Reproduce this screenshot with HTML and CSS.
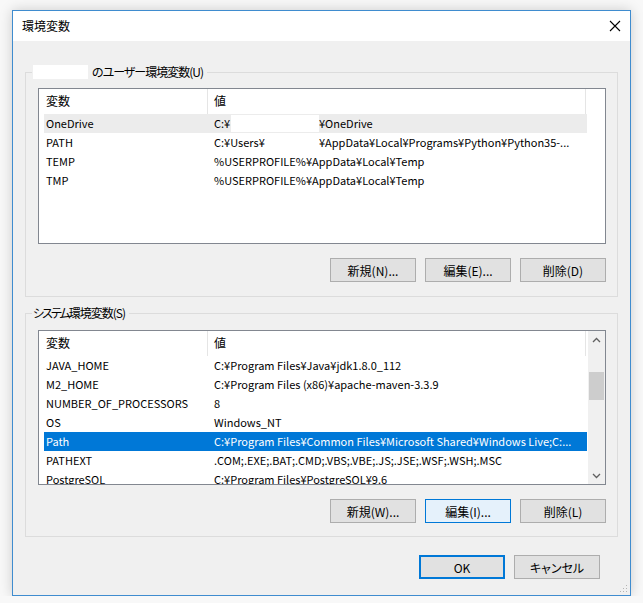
FILE: index.html
```html
<!DOCTYPE html>
<html lang="ja">
<head>
<meta charset="utf-8">
<title>環境変数</title>
<link rel="stylesheet" href="styles.css">
</head>
<body>
<div class="window">
  <div class="titlebar">
    <span class="title">環境変数</span>
    <svg class="close" width="12" height="12" viewBox="0 0 12 12"><path d="M1 1 L11 11 M11 1 L1 11" stroke="#000" stroke-width="1.1" fill="none"/></svg>
  </div>
  <div class="content">
    <section class="group group-user">
      <div class="legend"><span class="mask-name"></span><span>のユーザー環境変数(U)</span></div>
      <div class="list list-user">
        <div class="list-main">
          <div class="list-head"><div class="hc hc1">変数</div><div class="hc hc2">値</div></div>
          <div class="rows">
            <div class="row hover"><span class="c1">OneDrive</span><span class="c2"><span class="lead">C:¥<span class="mask"></span></span>¥OneDrive</span></div>
            <div class="row"><span class="c1">PATH</span><span class="c2"><span class="lead">C:¥Users¥<span class="mask"></span></span>¥AppData¥Local¥Programs¥Python¥Python35-...</span></div>
            <div class="row"><span class="c1">TEMP</span><span class="c2">%USERPROFILE%¥AppData¥Local¥Temp</span></div>
            <div class="row"><span class="c1">TMP</span><span class="c2">%USERPROFILE%¥AppData¥Local¥Temp</span></div>
          </div>
        </div>
        <div class="scroll-space"></div>
      </div>
      <div class="buttons">
        <button class="btn">新規(N)...</button>
        <button class="btn">編集(E)...</button>
        <button class="btn">削除(D)</button>
      </div>
    </section>

    <section class="group group-system">
      <div class="legend"><span><span class="kana">システム</span>環境変数(S)</span></div>
      <div class="list list-system">
        <div class="list-main">
          <div class="list-head"><div class="hc hc1">変数</div><div class="hc hc2">値</div></div>
          <div class="rows">
            <div class="row"><span class="c1">JAVA_HOME</span><span class="c2">C:¥Program Files¥Java¥jdk1.8.0_112</span></div>
            <div class="row"><span class="c1">M2_HOME</span><span class="c2">C:¥Program Files (x86)¥apache-maven-3.3.9</span></div>
            <div class="row"><span class="c1">NUMBER_OF_PROCESSORS</span><span class="c2">8</span></div>
            <div class="row"><span class="c1">OS</span><span class="c2">Windows_NT</span></div>
            <div class="row sel"><span class="c1">Path</span><span class="c2">C:¥Program Files¥Common Files¥Microsoft Shared¥Windows Live;C:...</span></div>
            <div class="row"><span class="c1">PATHEXT</span><span class="c2">.COM;.EXE;.BAT;.CMD;.VBS;.VBE;.JS;.JSE;.WSF;.WSH;.MSC</span></div>
            <div class="row"><span class="c1">PostgreSQL</span><span class="c2">C:¥Program Files¥PostgreSQL¥9.6</span></div>
          </div>
        </div>
        <div class="scrollbar">
          <div class="arrow"><svg width="9" height="6" viewBox="0 0 9 6"><path d="M1 5 L4.5 1.5 L8 5" stroke="#606060" stroke-width="1.3" fill="none"/></svg></div>
          <div class="track"><div class="thumb"></div></div>
          <div class="arrow"><svg width="9" height="6" viewBox="0 0 9 6"><path d="M1 1 L4.5 4.5 L8 1" stroke="#606060" stroke-width="1.3" fill="none"/></svg></div>
        </div>
      </div>
      <div class="buttons">
        <button class="btn">新規(W)...</button>
        <button class="btn focus">編集(I)...</button>
        <button class="btn">削除(L)</button>
      </div>
    </section>

    <div class="dialog-buttons">
      <button class="btn default">OK</button>
      <button class="btn">キャンセル</button>
    </div>
  </div>
  <svg class="grip" width="8" height="8" viewBox="0 0 8 8">
    <rect x="6" y="0" width="1" height="1" fill="#b5b5b5"/>
    <rect x="3" y="3" width="1" height="1" fill="#b5b5b5"/>
    <rect x="6" y="3" width="1" height="1" fill="#b5b5b5"/>
    <rect x="0" y="6" width="1" height="1" fill="#b5b5b5"/>
    <rect x="3" y="6" width="1" height="1" fill="#b5b5b5"/>
    <rect x="6" y="6" width="1" height="1" fill="#b5b5b5"/>
  </svg>
</div>
</body>
</html>
```

FILE: styles.css
```css
* {
  box-sizing: border-box;
}

body {
  margin: 0;
  background: #f8f8f8;
  font-family: "Noto Sans CJK JP", "Noto Sans", sans-serif;
  font-size: 12px;
  font-feature-settings: "palt";
  color: #000;
}

.window {
  position: relative;
  margin: 10px 0 0 12px;
  width: 619px;
  height: 586px;
  border: 1px solid #3f8ccf;
  background: #f0f0f0;
  box-shadow: 0 0 12px rgba(0, 0, 0, 0.18);
  display: flex;
  flex-direction: column;
}

.titlebar {
  height: 30px;
  background: #fff;
  display: flex;
  align-items: center;
  justify-content: space-between;
  padding: 0 9px 0 9px;
}

.title {
  line-height: 16px;
}

.close {
  display: block;
}

.content {
  padding: 31px 12px 0 12px;
}

.group {
  border: 1px solid #dcdcdc;
  padding: 0 11px 14px 12px;
}

.group-system {
  margin-top: 16px;
  padding-bottom: 13px;
}

.legend {
  display: flex;
  align-items: center;
  width: max-content;
  height: 16px;
  line-height: 16px;
  margin: -9px 0 8px -6px;
  padding: 0 4px 0 1px;
  background: #f0f0f0;
  letter-spacing: -1px;
}

.group-system .legend {
  margin-bottom: 9px;
}

.kana {
  letter-spacing: -2px;
}

.mask-name {
  display: inline-block;
  width: 55px;
  height: 14px;
  background: #fff;
  margin-right: 4px;
}

.list {
  display: flex;
  height: 156px;
  border: 1px solid #828790;
  background: #fff;
}

.list-system {
  height: 155px;
}

.list-main {
  flex: 1;
  overflow: hidden;
}

.list-head {
  display: flex;
  height: 25px;
}

.hc {
  border-right: 1px solid #e5e5e5;
  line-height: 24px;
}

.hc1 {
  width: 169px;
  padding-left: 7px;
}

.hc2 {
  width: 378px;
  padding-left: 6px;
}

.rows {
  margin: 0 1px 0 5px;
  font-size: 11px;
}

.row {
  display: flex;
  height: 19px;
  line-height: 19px;
  white-space: nowrap;
}

.row.hover {
  background: #ececec;
}

.row.sel {
  background: #0078d7;
  color: #fff;
}

.c1 {
  width: 163px;
  flex: none;
  padding-left: 2px;
}

.c2 {
  flex: 1;
  padding-left: 7px;
  overflow: hidden;
  display: flex;
  align-items: center;
}

.lead {
  display: inline-flex;
  align-items: center;
  width: 105px;
  flex: none;
}

.mask {
  flex: 1;
  height: 17px;
  margin-left: 1px;
  background: #fff;
}

.scroll-space {
  width: 17px;
}

.scrollbar {
  width: 17px;
  background: #f0f0f0;
  display: flex;
  flex-direction: column;
}

.arrow {
  height: 17px;
  display: flex;
  align-items: center;
  justify-content: center;
}

.track {
  flex: 1;
  padding: 24px 1px 0;
}

.thumb {
  height: 28px;
  background: #cdcdcd;
}

.buttons {
  display: flex;
  justify-content: flex-end;
  gap: 9px;
  margin-top: 14px;
}

.btn {
  width: 86px;
  height: 24px;
  padding: 0;
  border: 1px solid #adadad;
  background: #e1e1e1;
  font: inherit;
  color: #000;
}

.btn.focus {
  background: #e5f1fb;
  border-color: #0078d7;
}

.btn.default {
  border: 2px solid #0078d7;
}

.dialog-buttons {
  display: flex;
  justify-content: flex-end;
  gap: 9px;
  margin: 18px 18px 0 0;
}

.grip {
  position: absolute;
  right: 2px;
  bottom: 2px;
}
```
